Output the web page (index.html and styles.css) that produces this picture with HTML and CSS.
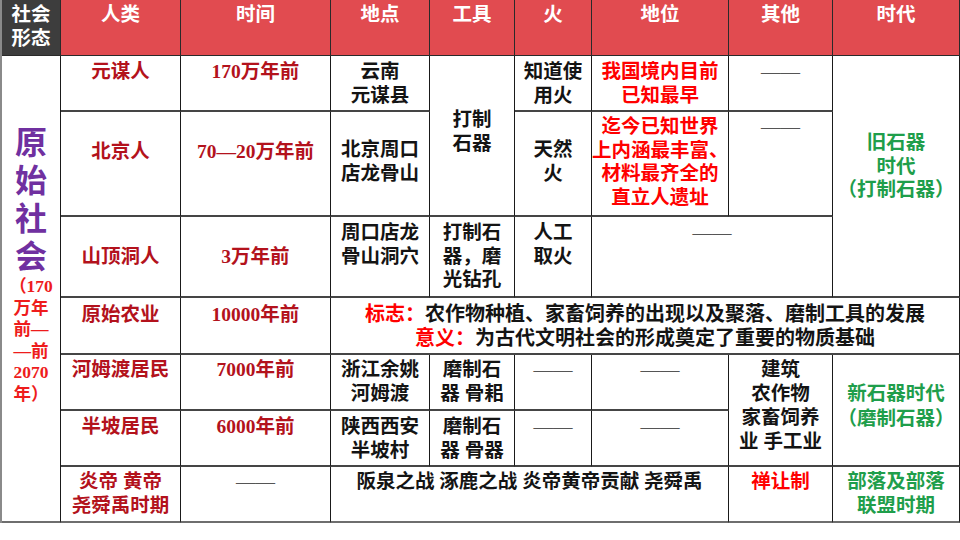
FILE: index.html
```html
<!DOCTYPE html>
<html lang="zh-CN">
<head>
<meta charset="utf-8">
<title>原始社会</title>
<link rel="stylesheet" href="styles.css">
</head>
<body>
<div class="sheet">
  <div class="cell hd hd-dark">社会<br>形态</div>
  <div class="cell hd">人类</div>
  <div class="cell hd">时间</div>
  <div class="cell hd">地点</div>
  <div class="cell hd">工具</div>
  <div class="cell hd">火</div>
  <div class="cell hd">地位</div>
  <div class="cell hd">其他</div>
  <div class="cell hd">时代</div>

  <div class="cell era rs7"><div class="era-big">原<br>始<br>社<br>会</div><div class="era-small">（170<br>万年<br>前—<br>—前<br>2070<br>年）</div></div>
  <div class="cell dr">元谋人</div>
  <div class="cell dr">170万年前</div>
  <div class="cell bk">云南<br>元谋县</div>
  <div class="cell bk rs2 p52">打制<br>石器</div>
  <div class="cell bk">知道使<br>用火</div>
  <div class="cell rd">我国境内目前<br>已知最早</div>
  <div class="cell"><span class="dash">——</span></div>
  <div class="cell gr rs3 p75">旧石器<br>时代<br>（打制石器）</div>

  <div class="cell dr p28">北京人</div>
  <div class="cell dr p28">70—20万年前</div>
  <div class="cell bk p26">北京周口<br>店龙骨山</div>
  <div class="cell bk p26">天然<br>火</div>
  <div class="cell rd p3">迄今已知世界<br>上内涵最丰富、<br>材料最齐全的<br>直立人遗址</div>
  <div class="cell p3"><span class="dash">——</span></div>

  <div class="cell dr p28">山顶洞人</div>
  <div class="cell dr p28">3万年前</div>
  <div class="cell bk">周口店龙<br>骨山洞穴</div>
  <div class="cell bk">打制石<br>器，磨<br>光钻孔</div>
  <div class="cell bk">人工<br>取火</div>
  <div class="cell cs2"><span class="dash">——</span></div>

  <div class="cell dr p5">原始农业</div>
  <div class="cell dr p5">10000年前</div>
  <div class="cell bk cs6 p5 wide"><span class="rd">标志：</span>农作物种植、家畜饲养的出现以及聚落、磨制工具的发展<br><span class="rd">意义：</span>为古代文明社会的形成奠定了重要的物质基础</div>

  <div class="cell dr p3">河姆渡居民</div>
  <div class="cell dr p3">7000年前</div>
  <div class="cell bk p3">浙江余姚<br>河姆渡</div>
  <div class="cell bk p3">磨制石<br>器 骨耜</div>
  <div class="cell p3"><span class="dash">——</span></div>
  <div class="cell p3"><span class="dash">——</span></div>
  <div class="cell bk rs2 p3 lh24">建筑<br>农作物<br>家畜饲养<br>业 手工业</div>
  <div class="cell gr rs2 p26 lh25">新石器时代<br>（磨制石器）</div>

  <div class="cell dr">半坡居民</div>
  <div class="cell dr">6000年前</div>
  <div class="cell bk">陕西西安<br>半坡村</div>
  <div class="cell bk">磨制石<br>器 骨器</div>
  <div class="cell"><span class="dash">——</span></div>
  <div class="cell"><span class="dash">——</span></div>

  <div class="cell dr p3 last">炎帝 黄帝<br>尧舜禹时期</div>
  <div class="cell p3 last"><span class="dash">——</span></div>
  <div class="cell bk cs4 p3 last">阪泉之战 涿鹿之战 炎帝黄帝贡献 尧舜禹</div>
  <div class="cell rd p3 last">禅让制</div>
  <div class="cell gr p3 last">部落及部落<br>联盟时期</div>
</div>
</body>
</html>
```
FILE: styles.css
```css
html, body {
  margin: 0;
  padding: 0;
  background: #ffffff;
}

.sheet {
  display: grid;
  grid-template-columns: 59px 120px 150px 99px 85px 77px 137px 104px 127px;
  grid-template-rows: 56px 56px 105px 81px 57px 56px 56px 56px;
  width: 960px;
  box-sizing: border-box;
  border-left: 2px solid #8a8a8a;
  font-family: "Liberation Serif", "Noto Sans CJK SC", serif;
  font-weight: 700;
  font-size: 19.5px;
  line-height: 23.5px;
}

.cell {
  box-sizing: border-box;
  border-right: 1px solid #1a1a1a;
  border-bottom: 2px solid #454545;
  text-align: center;
  padding-top: 4px;
  white-space: nowrap;
  overflow: visible;
}

.last {
  border-bottom-color: #6e6e6e;
}

.hd {
  background: #e14b50;
  color: #ffffff;
  padding-top: 3px;
  border-bottom: 1px solid #2a2a2a;
  border-right-color: #2a2a2a;
}

.hd-dark {
  background: #3d3d3d;
}

.rs2 { grid-row: span 2; }
.rs3 { grid-row: span 3; }
.rs7 { grid-row: span 7; }
.cs2 { grid-column: span 2; }
.cs4 { grid-column: span 4; }
.cs6 { grid-column: span 6; }

.p3 { padding-top: 3px; }
.p5 { padding-top: 5px; }
.p26 { padding-top: 26px; }
.p28 { padding-top: 28px; }
.p52 { padding-top: 52px; }
.p75 { padding-top: 75px; }

.lh24 { line-height: 24px; }
.lh25 { line-height: 25px; }

.wide {
  font-size: 20px;
}

.dr { color: #b3121c; }
.rd { color: #ff0000; }
.gr { color: #1f9e4b; }
.bk { color: #141414; }

.dash {
  color: #555555;
  font-weight: 400;
}

.era {
  padding-top: 68px;
  border-bottom-color: #6e6e6e;
}

.era-big {
  color: #7030a0;
  font-size: 32px;
  line-height: 38px;
}

.era-small {
  color: #ee1c1c;
  font-size: 17.5px;
  line-height: 21.5px;
}
```
